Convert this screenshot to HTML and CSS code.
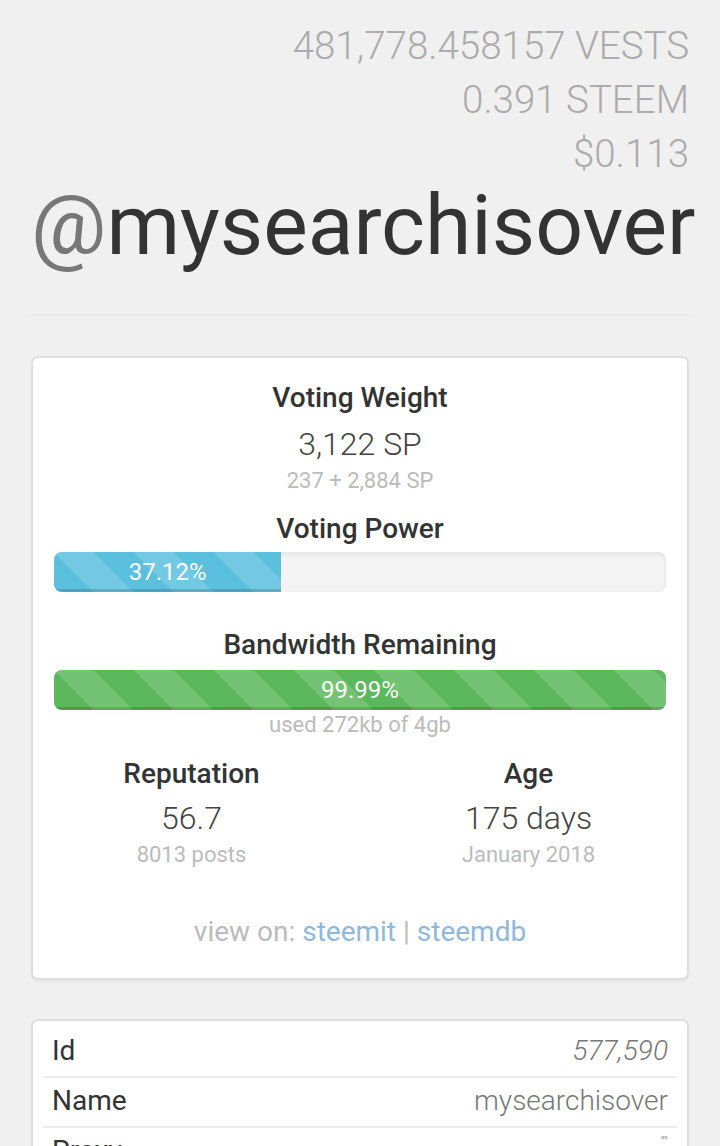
FILE: index.html
```html
<!DOCTYPE html>
<html>
<head>
<meta charset="utf-8">
<link rel="stylesheet" href="styles.css">
</head>
<body>
<div class="page">
  <div class="balances">
    <div class="bal">481,778.458157 VESTS</div>
    <div class="bal">0.391 STEEM</div>
    <div class="bal">$0.113</div>
  </div>
  <h1 class="account"><span class="at">@</span>mysearchisover</h1>
  <hr class="rule">

  <div class="card stats">
    <div class="title">Voting Weight</div>
    <div class="value">3,122 SP</div>
    <div class="sub">237 + 2,884 SP</div>

    <div class="title t-vp">Voting Power</div>
    <div class="progress"><div class="bar bar-info" style="width:37.12%">37.12%</div></div>

    <div class="title t-bw">Bandwidth Remaining</div>
    <div class="progress"><div class="bar bar-success" style="width:99.99%">99.99%</div></div>
    <div class="sub">used 272kb of 4gb</div>

    <div class="cols">
      <div class="col">
        <div class="title">Reputation</div>
        <div class="value">56.7</div>
        <div class="sub">8013 posts</div>
      </div>
      <div class="col">
        <div class="title">Age</div>
        <div class="value">175 days</div>
        <div class="sub">January 2018</div>
      </div>
    </div>

    <div class="links">view on: <a href="#">steemit</a> | <a href="#">steemdb</a></div>
  </div>

  <div class="card props">
    <div class="row"><span class="k">Id</span><span class="v num">577,590</span></div>
    <div class="row"><span class="k">Name</span><span class="v">mysearchisover</span></div>
    <div class="row"><span class="k">Proxy</span><span class="v tiny">''''</span></div>
  </div>
</div>
</body>
</html>
```
FILE: styles.css
```css
html, body {
  margin: 0;
  padding: 0;
  background: #f0f0f0;
}
body {
  font-family: Roboto, "Liberation Sans", sans-serif;
  color: #333;
  overflow: hidden;
}
.page {
  padding: 19px 31px 0 31px;
}
.balances {
  text-align: right;
}
.bal {
  font-size: 38.5px;
  font-weight: 300;
  line-height: 54px;
  color: #ababab;
}
.account {
  margin: 0;
  font-weight: 400;
  font-size: 84px;
  line-height: 90px;
  text-align: right;
  color: #333;
  margin-right: -3px;
}
.at {
  color: #777;
}
.rule {
  border: 0;
  border-top: 2px solid #e9e9e9;
  margin: 43px 0 40px 0;
}
.card {
  background: #fff;
  border: 2px solid #dedede;
  border-radius: 7px;
  box-shadow: 0 2px 2px rgba(0, 0, 0, 0.04);
}
.stats {
  padding: 22px 21px 28px 21px;
  text-align: center;
}
.title {
  font-size: 28px;
  font-weight: 500;
  line-height: 36px;
  color: #333;
}
.value {
  margin-top: 8px;
  font-size: 32px;
  font-weight: 300;
  line-height: 40px;
  color: #444;
}
.sub {
  margin-top: 3px;
  font-size: 22px;
  line-height: 28px;
  color: #bbb;
}
.t-vp {
  margin-top: 16px;
}
.t-bw {
  margin-top: 35px;
}
.progress {
  margin-top: 5px;
  height: 40px;
  background: #f3f3f3;
  border-radius: 8px;
  box-shadow: inset 0 2px 4px rgba(0, 0, 0, 0.08);
  overflow: hidden;
}
.t-bw + .progress {
  margin-top: 7px;
}
.progress + .sub {
  margin-top: 1px;
}
.bar {
  height: 100%;
  color: #fff;
  font-size: 24px;
  line-height: 40px;
  text-align: center;
  box-shadow: inset 0 -3px 0 rgba(0, 0, 0, 0.15);
  background-image: linear-gradient(45deg, rgba(255,255,255,.15) 25%, transparent 25%, transparent 50%, rgba(255,255,255,.15) 50%, rgba(255,255,255,.15) 75%, transparent 75%, transparent);
  background-size: 80px 80px;
}
.bar-info {
  background-color: #5bc0de;
}
.bar-success {
  background-color: #5cb85c;
}
.cols {
  display: grid;
  grid-template-columns: 1fr 1fr;
  margin: 17px -31px 0 -31px;
}
.col .value {
  margin-top: 6px;
}
.links {
  margin-top: 45px;
  font-size: 28px;
  line-height: 36px;
  color: #bbb;
}
.links a {
  color: #8fb8de;
  text-decoration: none;
}
.props {
  margin-top: 39px;
  padding: 7px 10px 0 10px;
  border-bottom-left-radius: 0;
  border-bottom-right-radius: 0;
}
.row {
  display: flex;
  justify-content: space-between;
  align-items: center;
  box-sizing: border-box;
  height: 50px;
  padding: 0 9px 4px 9px;
  border-bottom: 2px solid #ececec;
}
.k {
  font-size: 28px;
  color: #333;
}
.v {
  font-size: 28px;
  font-weight: 300;
  color: #777;
}
.num {
  font-style: italic;
}
.tiny {
  font-size: 14px;
  align-self: flex-start;
  margin-top: 6px;
  color: #888;
}
```
